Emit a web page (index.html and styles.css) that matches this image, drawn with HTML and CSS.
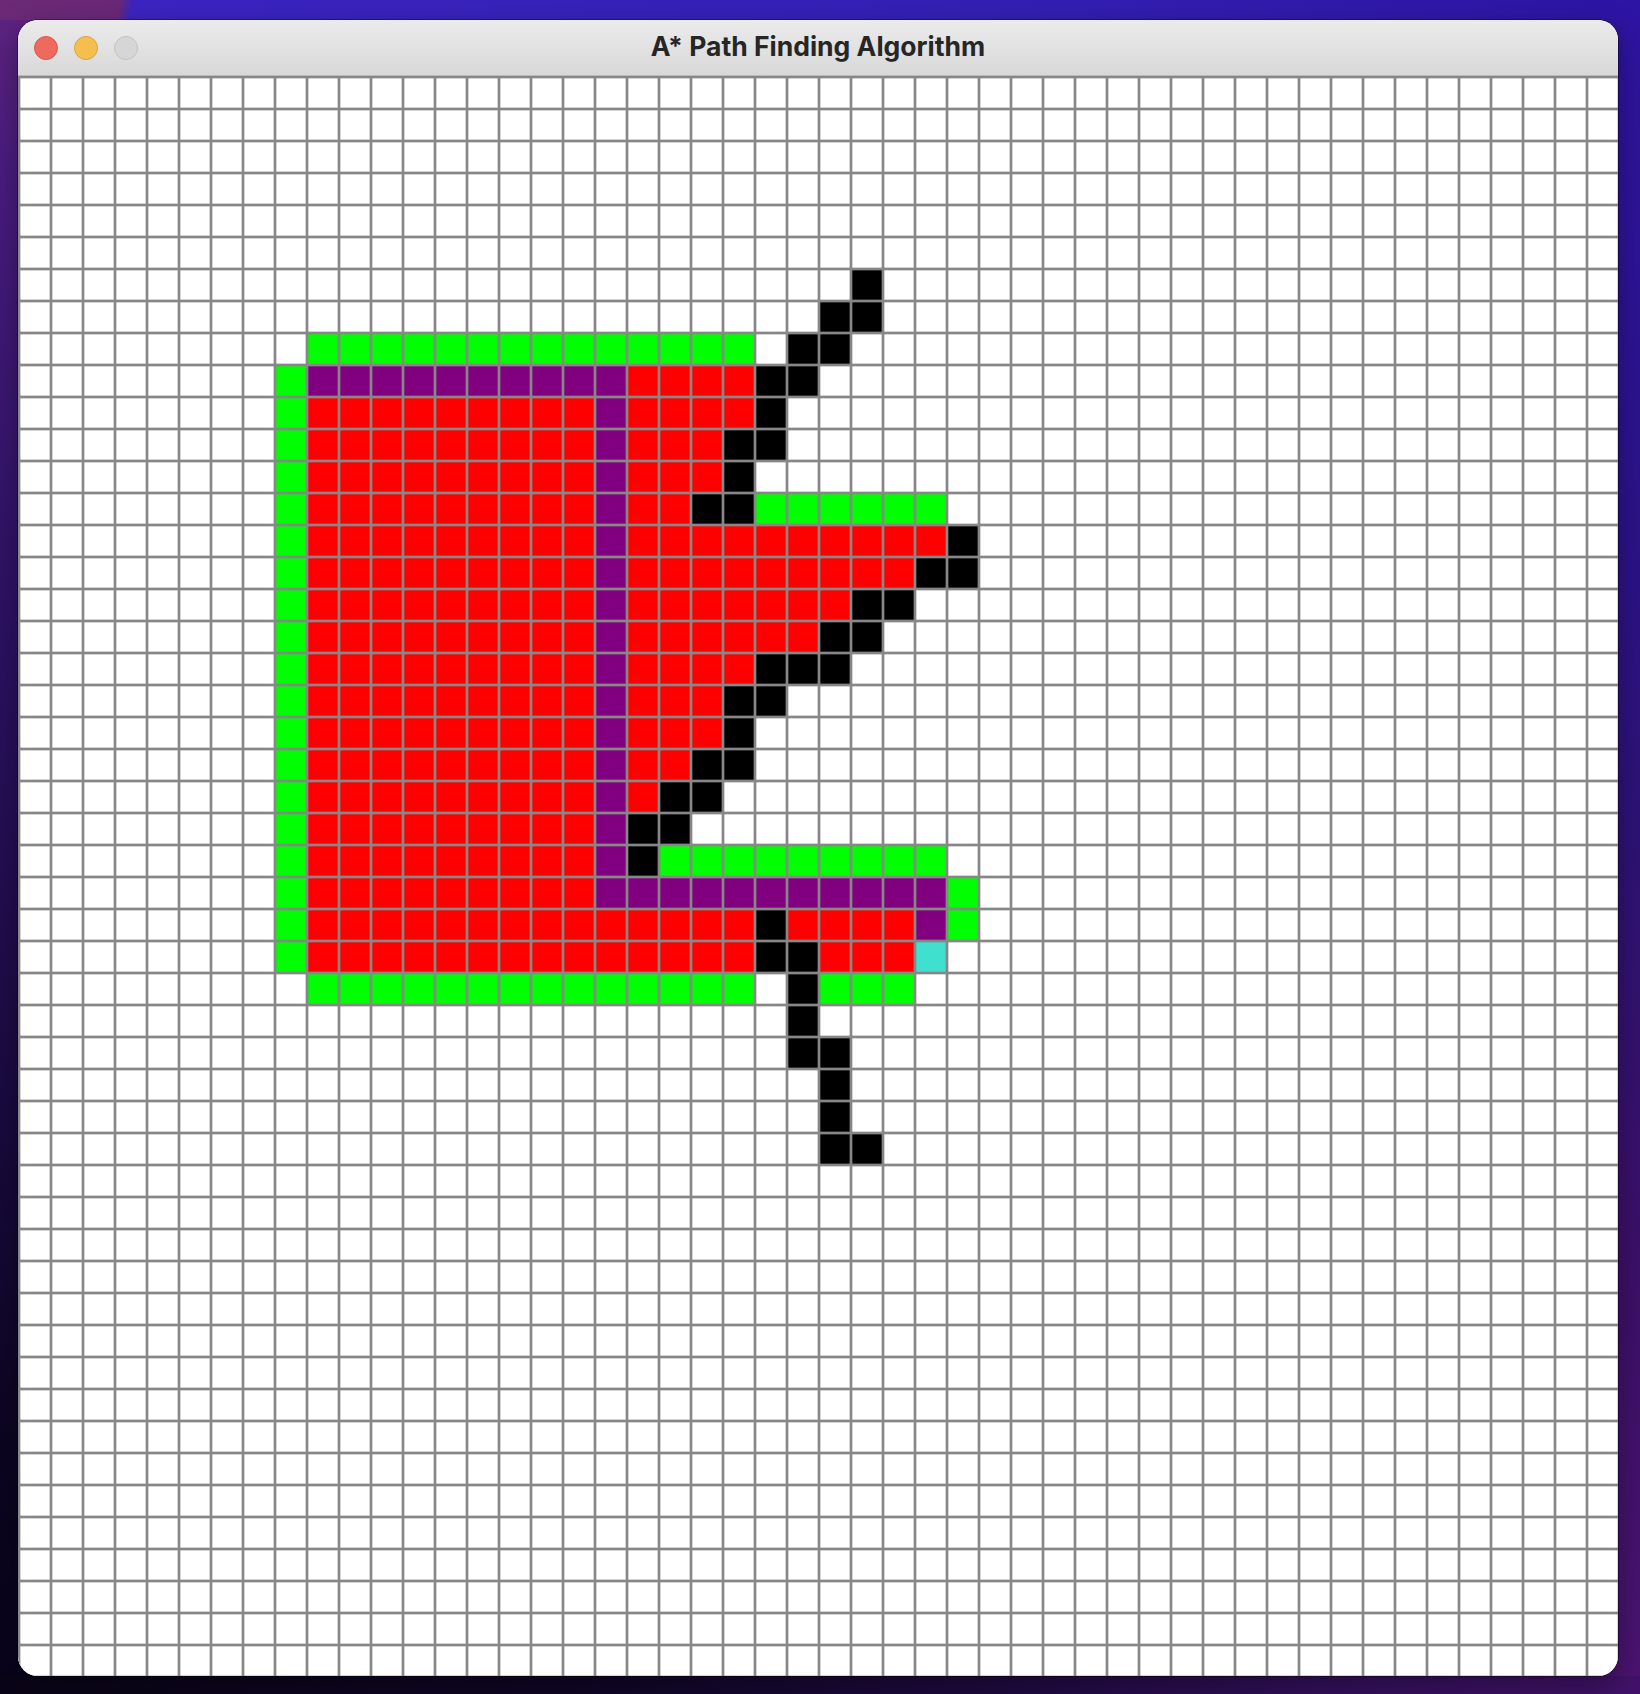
FILE: index.html
```html
<!DOCTYPE html>
<html lang="en">
<head>
<meta charset="utf-8">
<title>A* Path Finding Algorithm</title>
<link rel="stylesheet" href="styles.css">
</head>
<body>
<div class="window">
  <div class="titlebar">
    <div class="lights">
      <span class="light close"></span>
      <span class="light minimize"></span>
      <span class="light zoom"></span>
    </div>
    <div class="title">A* Path Finding Algorithm</div>
    <div class="spacer"></div>
  </div>
  <div class="board">
    <div class="cell open" style="grid-area: 9 / 10 / 10 / 24"></div>
    <div class="cell open" style="grid-area: 10 / 9 / 29 / 10"></div>
    <div class="cell open" style="grid-area: 29 / 10 / 30 / 24"></div>
    <div class="cell open" style="grid-area: 14 / 24 / 15 / 30"></div>
    <div class="cell open" style="grid-area: 25 / 21 / 26 / 30"></div>
    <div class="cell open" style="grid-area: 26 / 30 / 28 / 31"></div>
    <div class="cell open" style="grid-area: 29 / 26 / 30 / 29"></div>

    <div class="cell path" style="grid-area: 10 / 10 / 11 / 20"></div>
    <div class="cell path" style="grid-area: 11 / 19 / 27 / 20"></div>
    <div class="cell path" style="grid-area: 26 / 20 / 27 / 30"></div>
    <div class="cell path" style="grid-area: 27 / 29 / 28 / 30"></div>

    <div class="cell end" style="grid-area: 28 / 29 / 29 / 30"></div>

    <div class="cell closed" style="grid-area: 11 / 10 / 29 / 19"></div>
    <div class="cell closed" style="grid-area: 10 / 20 / 12 / 24"></div>
    <div class="cell closed" style="grid-area: 12 / 20 / 14 / 23"></div>
    <div class="cell closed" style="grid-area: 14 / 20 / 15 / 22"></div>
    <div class="cell closed" style="grid-area: 15 / 20 / 16 / 30"></div>
    <div class="cell closed" style="grid-area: 16 / 20 / 17 / 29"></div>
    <div class="cell closed" style="grid-area: 17 / 20 / 18 / 27"></div>
    <div class="cell closed" style="grid-area: 18 / 20 / 19 / 26"></div>
    <div class="cell closed" style="grid-area: 19 / 20 / 20 / 24"></div>
    <div class="cell closed" style="grid-area: 20 / 20 / 22 / 23"></div>
    <div class="cell closed" style="grid-area: 22 / 20 / 23 / 22"></div>
    <div class="cell closed" style="grid-area: 23 / 20 / 24 / 21"></div>
    <div class="cell closed" style="grid-area: 27 / 19 / 29 / 24"></div>
    <div class="cell closed" style="grid-area: 27 / 25 / 28 / 29"></div>
    <div class="cell closed" style="grid-area: 28 / 26 / 29 / 29"></div>

    <div class="cell barrier" style="grid-area: 7 / 27 / 8 / 28"></div>
    <div class="cell barrier" style="grid-area: 8 / 26 / 9 / 28"></div>
    <div class="cell barrier" style="grid-area: 9 / 25 / 10 / 27"></div>
    <div class="cell barrier" style="grid-area: 10 / 24 / 11 / 26"></div>
    <div class="cell barrier" style="grid-area: 11 / 24 / 12 / 25"></div>
    <div class="cell barrier" style="grid-area: 12 / 23 / 13 / 25"></div>
    <div class="cell barrier" style="grid-area: 13 / 23 / 14 / 24"></div>
    <div class="cell barrier" style="grid-area: 14 / 22 / 15 / 24"></div>
    <div class="cell barrier" style="grid-area: 15 / 30 / 16 / 31"></div>
    <div class="cell barrier" style="grid-area: 16 / 29 / 17 / 31"></div>
    <div class="cell barrier" style="grid-area: 17 / 27 / 18 / 29"></div>
    <div class="cell barrier" style="grid-area: 18 / 26 / 19 / 28"></div>
    <div class="cell barrier" style="grid-area: 19 / 24 / 20 / 27"></div>
    <div class="cell barrier" style="grid-area: 20 / 23 / 21 / 25"></div>
    <div class="cell barrier" style="grid-area: 21 / 23 / 22 / 24"></div>
    <div class="cell barrier" style="grid-area: 22 / 22 / 23 / 24"></div>
    <div class="cell barrier" style="grid-area: 23 / 21 / 24 / 23"></div>
    <div class="cell barrier" style="grid-area: 24 / 20 / 25 / 22"></div>
    <div class="cell barrier" style="grid-area: 25 / 20 / 26 / 21"></div>
    <div class="cell barrier" style="grid-area: 27 / 24 / 28 / 25"></div>
    <div class="cell barrier" style="grid-area: 28 / 24 / 29 / 26"></div>
    <div class="cell barrier" style="grid-area: 29 / 25 / 30 / 26"></div>
    <div class="cell barrier" style="grid-area: 30 / 25 / 31 / 26"></div>
    <div class="cell barrier" style="grid-area: 31 / 25 / 32 / 27"></div>
    <div class="cell barrier" style="grid-area: 32 / 26 / 34 / 27"></div>
    <div class="cell barrier" style="grid-area: 34 / 26 / 35 / 28"></div>
  </div>
</div>
</body>
</html>
```

FILE: styles.css
```css
html, body {
  margin: 0;
  padding: 0;
}

body {
  width: 1640px;
  height: 1694px;
  overflow: hidden;
  box-sizing: border-box;
  padding: 20px 0 0 18px;
  font-family: "Inter", "Liberation Sans", sans-serif;
  background:
    linear-gradient(100deg, #6c2a76 0, #6a2878 118px, #3b24c2 132px, #3320b4 60%, #2d14a4 100%) left top / 100% 20px no-repeat,
    linear-gradient(to right, #0a0418 0, #100626 35%, #1e0a40 60%, #33105c 80%, #42126a 100%) left bottom / 100% 18px no-repeat,
    linear-gradient(to bottom, #5e2480 0, #4a1c80 10%, #2e1266 35%, #1a0a40 65%, #0c0522 85%, #08031a 100%) left top / 50% 100% no-repeat,
    linear-gradient(to bottom, #2e14a2 0, #2c1390 25%, #2e1276 50%, #3c1068 75%, #4a1470 100%) right top / 50% 100% no-repeat;
}

.window {
  width: 1600px;
  height: 1656px;
  border-radius: 20px;
  overflow: hidden;
  background: #ffffff;
  box-shadow: 0 0 0 1px rgba(0, 0, 0, 0.35), 0 10px 30px rgba(0, 0, 0, 0.35);
  display: flex;
  flex-direction: column;
}

.titlebar {
  height: 55px;
  flex: none;
  border-bottom: 1px solid #b9b9b9;
  background: linear-gradient(to bottom, #ebebeb 0%, #e2e2e2 50%, #d8d8d8 100%);
  display: grid;
  grid-template-columns: 1fr auto 1fr;
  align-items: center;
}

.lights {
  display: flex;
  gap: 16px;
  padding-left: 16px;
  padding-top: 1px;
}

.light {
  width: 24px;
  height: 24px;
  border-radius: 50%;
  box-sizing: border-box;
}

.light.close {
  background: #ee6a5f;
  border: 1px solid #d5584d;
}

.light.minimize {
  background: #f5bf4f;
  border: 1px solid #d9a43f;
}

.light.zoom {
  background: #d6d6d6;
  border: 1px solid #c2c2c2;
}

.title {
  font-size: 26.5px;
  font-weight: 700;
  color: #262626;
  letter-spacing: 0;
  padding-bottom: 3px;
}

.board {
  position: relative;
  flex: none;
  width: 1600px;
  height: 1600px;
  background: #ffffff;
  display: grid;
  grid-template-columns: repeat(50, 32px);
  grid-template-rows: repeat(50, 32px);
}

.board::after {
  content: "";
  position: absolute;
  inset: 0;
  pointer-events: none;
  background-image:
    linear-gradient(to right, #878787 0 2px, rgba(135, 135, 135, 0.35) 2px 3px, transparent 3px 31px, rgba(135, 135, 135, 0.35) 31px 32px),
    linear-gradient(to bottom, #878787 0 2px, rgba(135, 135, 135, 0.35) 2px 3px, transparent 3px 31px, rgba(135, 135, 135, 0.35) 31px 32px);
  background-size: 32px 32px;
}

.cell.open { background: #00ff00; }
.cell.closed { background: #ff0000; }
.cell.path { background: #800080; }
.cell.end { background: #40e0d0; }
.cell.barrier { background: #000000; }
```
